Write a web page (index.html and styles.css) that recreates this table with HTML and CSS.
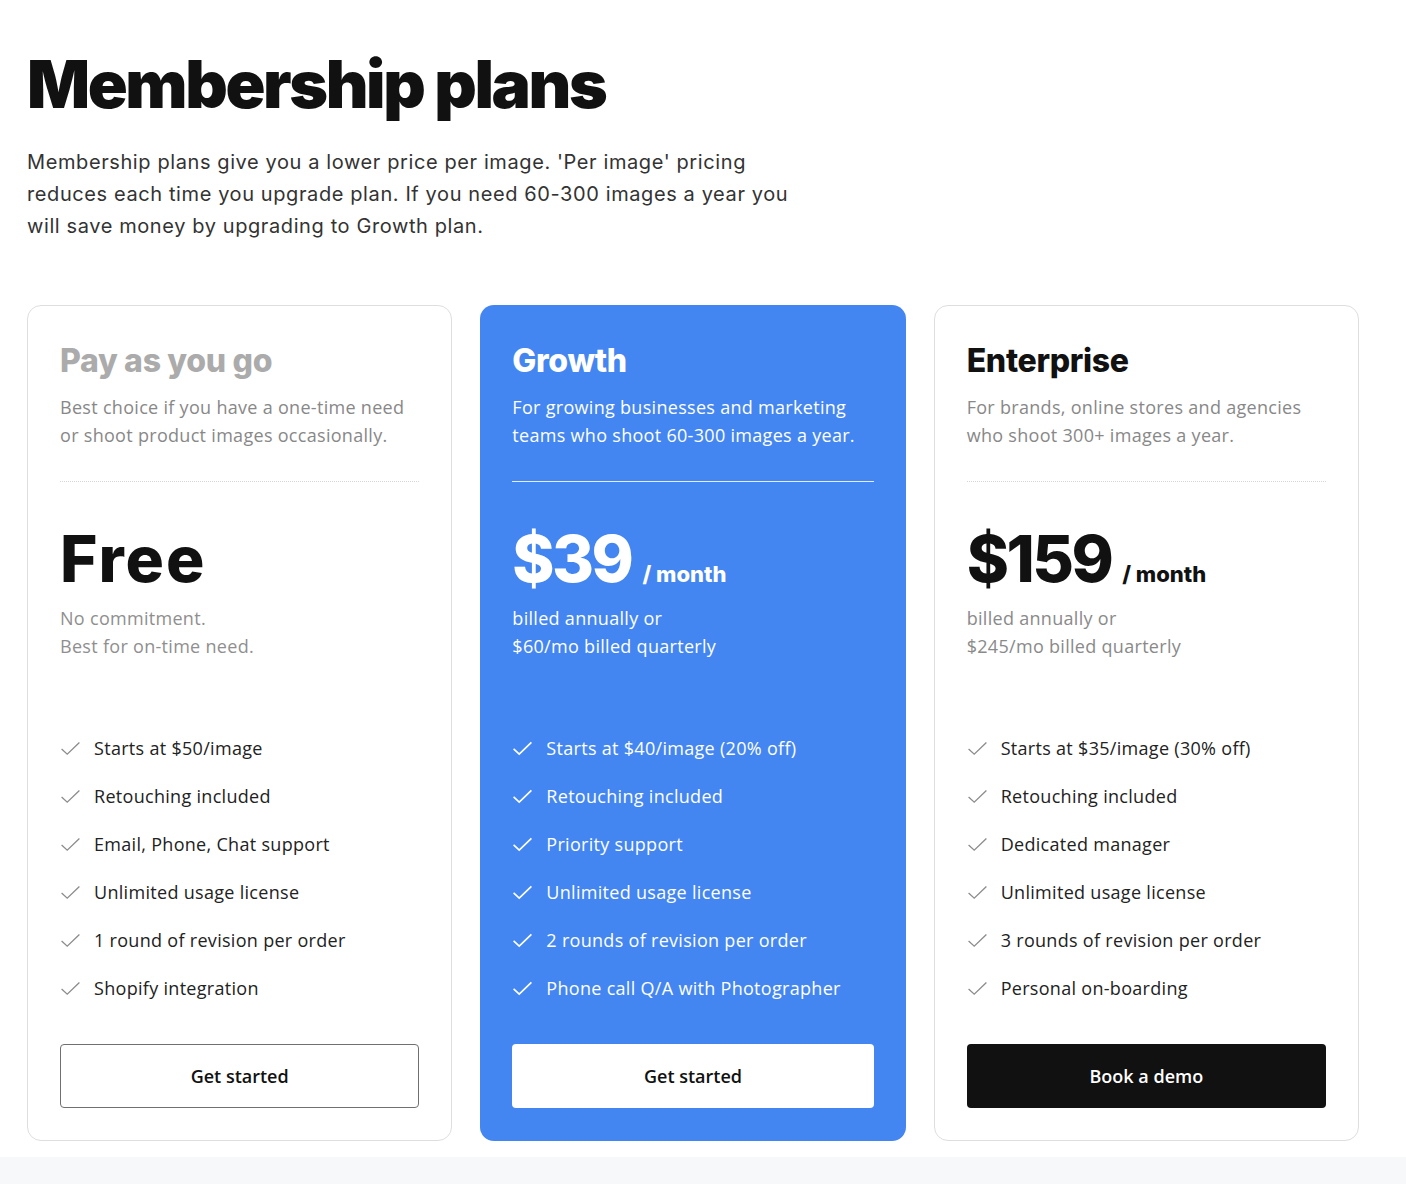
FILE: index.html
```html
<!DOCTYPE html>
<html lang="en">
<head>
<meta charset="utf-8">
<title>Membership plans</title>
<link rel="stylesheet" href="styles.css">
</head>
<body>
<main class="page">
  <section class="intro">
    <h1 class="title">Membership plans</h1>
    <p class="lead">Membership plans give you a lower price per image. 'Per image' pricing reduces each time you upgrade plan. If you need 60-300 images a year you will save money by upgrading to Growth plan.</p>
  </section>

  <section class="plans">
    <article class="card card-basic">
      <h2 class="plan-name">Pay as you go</h2>
      <p class="plan-desc">Best choice if you have a one-time need or shoot product images occasionally.</p>
      <hr class="divider">
      <div class="price-block">
        <div class="price"><span class="amount amount-word">Free</span></div>
        <p class="billing">No commitment.<br>Best for on-time need.</p>
      </div>
      <ul class="features">
        <li><svg class="check" viewBox="0 0 22 16"><path d="M1.5 8.5 L7.5 14 L20.5 1.5"/></svg>Starts at $50/image</li>
        <li><svg class="check" viewBox="0 0 22 16"><path d="M1.5 8.5 L7.5 14 L20.5 1.5"/></svg>Retouching included</li>
        <li><svg class="check" viewBox="0 0 22 16"><path d="M1.5 8.5 L7.5 14 L20.5 1.5"/></svg>Email, Phone, Chat support</li>
        <li><svg class="check" viewBox="0 0 22 16"><path d="M1.5 8.5 L7.5 14 L20.5 1.5"/></svg>Unlimited usage license</li>
        <li><svg class="check" viewBox="0 0 22 16"><path d="M1.5 8.5 L7.5 14 L20.5 1.5"/></svg>1 round of revision per order</li>
        <li><svg class="check" viewBox="0 0 22 16"><path d="M1.5 8.5 L7.5 14 L20.5 1.5"/></svg>Shopify integration</li>
      </ul>
      <a class="btn btn-outline" href="#">Get started</a>
    </article>

    <article class="card card-featured">
      <h2 class="plan-name">Growth</h2>
      <p class="plan-desc">For growing businesses and marketing teams who shoot 60-300 images a year.</p>
      <hr class="divider">
      <div class="price-block">
        <div class="price"><span class="amount">$39</span><span class="per">/ month</span></div>
        <p class="billing">billed annually or<br>$60/mo billed quarterly</p>
      </div>
      <ul class="features">
        <li><svg class="check" viewBox="0 0 22 16"><path d="M1.5 8.5 L7.5 14 L20.5 1.5"/></svg>Starts at $40/image (20% off)</li>
        <li><svg class="check" viewBox="0 0 22 16"><path d="M1.5 8.5 L7.5 14 L20.5 1.5"/></svg>Retouching included</li>
        <li><svg class="check" viewBox="0 0 22 16"><path d="M1.5 8.5 L7.5 14 L20.5 1.5"/></svg>Priority support</li>
        <li><svg class="check" viewBox="0 0 22 16"><path d="M1.5 8.5 L7.5 14 L20.5 1.5"/></svg>Unlimited usage license</li>
        <li><svg class="check" viewBox="0 0 22 16"><path d="M1.5 8.5 L7.5 14 L20.5 1.5"/></svg>2 rounds of revision per order</li>
        <li><svg class="check" viewBox="0 0 22 16"><path d="M1.5 8.5 L7.5 14 L20.5 1.5"/></svg>Phone call Q/A with Photographer</li>
      </ul>
      <a class="btn btn-white" href="#">Get started</a>
    </article>

    <article class="card card-enterprise">
      <h2 class="plan-name">Enterprise</h2>
      <p class="plan-desc">For brands, online stores and agencies who shoot 300+ images a year.</p>
      <hr class="divider">
      <div class="price-block">
        <div class="price"><span class="amount">$159</span><span class="per">/ month</span></div>
        <p class="billing">billed annually or<br>$245/mo billed quarterly</p>
      </div>
      <ul class="features">
        <li><svg class="check" viewBox="0 0 22 16"><path d="M1.5 8.5 L7.5 14 L20.5 1.5"/></svg>Starts at $35/image (30% off)</li>
        <li><svg class="check" viewBox="0 0 22 16"><path d="M1.5 8.5 L7.5 14 L20.5 1.5"/></svg>Retouching included</li>
        <li><svg class="check" viewBox="0 0 22 16"><path d="M1.5 8.5 L7.5 14 L20.5 1.5"/></svg>Dedicated manager</li>
        <li><svg class="check" viewBox="0 0 22 16"><path d="M1.5 8.5 L7.5 14 L20.5 1.5"/></svg>Unlimited usage license</li>
        <li><svg class="check" viewBox="0 0 22 16"><path d="M1.5 8.5 L7.5 14 L20.5 1.5"/></svg>3 rounds of revision per order</li>
        <li><svg class="check" viewBox="0 0 22 16"><path d="M1.5 8.5 L7.5 14 L20.5 1.5"/></svg>Personal on-boarding</li>
      </ul>
      <a class="btn btn-dark" href="#">Book a demo</a>
    </article>
  </section>
</main>
<div class="footer-band"></div>
</body>
</html>
```
FILE: styles.css
```css
* { box-sizing: border-box; }
html, body { margin: 0; padding: 0; background: #fff; }
body { font-family: "Open Sans", "Noto Sans", sans-serif; color: #222; letter-spacing: 0.3px; }

.page { padding: 44px 47px 0 27px; }

.title {
  font-family: Inter, "Liberation Sans", sans-serif;
  font-weight: 900;
  font-size: 66px;
  line-height: 80px;
  letter-spacing: -2.4px;
  color: #111;
  margin: 0;
}

.lead {
  font-family: Inter, "Liberation Sans", sans-serif;
  font-size: 20px;
  line-height: 32px;
  color: #333;
  max-width: 790px;
  margin: 22px 0 0;
  letter-spacing: 0.6px;
}

.plans {
  display: grid;
  grid-template-columns: repeat(3, 1fr);
  gap: 28px;
  margin-top: 63px;
}

.card {
  display: flex;
  flex-direction: column;
  border: 1px solid #dedede;
  border-radius: 14px;
  padding: 35px 32px 32px 32px;
  min-height: 836px;
}

.plan-name {
  font-family: Inter, "Open Sans", sans-serif;
  font-weight: 800;
  font-size: 32px;
  line-height: 40px;
  letter-spacing: -0.3px;
  margin: 0;
}

.plan-desc {
  font-size: 18px;
  line-height: 28px;
  color: #888;
  margin: 12px 0 0;
}

.divider {
  border: 0;
  border-top: 1px dotted #d6d6d6;
  margin: 32px 0 0;
}

.price-block { min-height: 242px; padding-top: 40px; }

.price { display: flex; align-items: baseline; gap: 11px; }
.amount {
  font-family: Inter, "Open Sans", sans-serif;
  font-weight: 800;
  font-size: 64px;
  line-height: 74px;
  letter-spacing: -2.5px;
  color: #111;
}
.amount-word { letter-spacing: 2px; }
.per {
  font-family: Inter, "Open Sans", sans-serif;
  font-weight: 800;
  font-size: 22px;
  letter-spacing: 0;
  color: #111;
}

.billing {
  font-size: 18px;
  line-height: 28px;
  color: #8a8a8a;
  margin: 8px 0 0;
}

.features { list-style: none; margin: 0; padding: 0; }
.features li {
  display: flex;
  align-items: center;
  height: 48px;
  font-size: 18px;
  color: #222;
}
.check {
  width: 21px;
  height: 15px;
  margin-right: 13px;
  flex-shrink: 0;
  fill: none;
  stroke: #8c8c8c;
  stroke-width: 1.4;
}

.btn {
  margin-top: auto;
  display: flex;
  align-items: center;
  justify-content: center;
  height: 64px;
  border-radius: 4px;
  font-size: 18px;
  font-weight: 600;
  letter-spacing: 0;
  text-decoration: none;
}
.btn-outline { border: 1px solid #707070; color: #111; background: #fff; }
.btn-white { background: #fff; color: #111; }
.btn-dark { background: #111; color: #fff; }

.card-basic .plan-name { color: #ababab; }
.card-basic .billing { color: #8f8f8f; }

.card-featured { background: #4386f1; border: 0; padding: 36px 32px 33px 32px; }
.card-featured .plan-name,
.card-featured .plan-desc,
.card-featured .amount,
.card-featured .per,
.card-featured .billing,
.card-featured .features li { color: #fff; }
.card-featured .divider { border-top: 1px solid rgba(255,255,255,0.85); }
.card-featured .check { stroke: #fff; stroke-width: 1.8; }

.card-enterprise .plan-name { color: #111; }

.footer-band {
  margin-top: 16px;
  height: 30px;
  background: #f7f8fa;
}
```
